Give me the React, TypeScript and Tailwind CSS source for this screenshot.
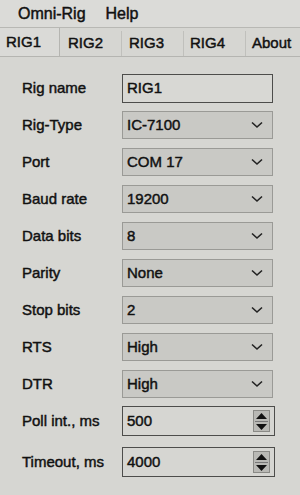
import React from "react";

const font = { fontFamily: '"Liberation Sans", Arial, sans-serif' };

function Chevron() {
  return (
    <svg width="12" height="8" viewBox="0 0 12 8" className="shrink-0">
      <polyline points="1,1.5 6,6 11,1.5" fill="none" stroke="#222" strokeWidth="1.6" />
    </svg>
  );
}

function Spin() {
  return (
    <div className="h-[22px] w-[17px] flex flex-col items-center justify-center gap-[2px] bg-[#b9b9b5] border border-[#8a8a86]">
      <svg width="11" height="6" viewBox="0 0 11 6">
        <polygon points="5.5,0 11,6 0,6" fill="#111" />
      </svg>
      <div className="h-px w-[13px] bg-[#777]" />
      <svg width="11" height="6" viewBox="0 0 11 6">
        <polygon points="0,0 11,0 5.5,6" fill="#111" />
      </svg>
    </div>
  );
}

type Row = { label: string; value: string; kind: "text" | "combo" | "spin" };

const rows: Row[] = [
  { label: "Rig name", value: "RIG1", kind: "text" },
  { label: "Rig-Type", value: "IC-7100", kind: "combo" },
  { label: "Port", value: "COM 17", kind: "combo" },
  { label: "Baud rate", value: "19200", kind: "combo" },
  { label: "Data bits", value: "8", kind: "combo" },
  { label: "Parity", value: "None", kind: "combo" },
  { label: "Stop bits", value: "2", kind: "combo" },
  { label: "RTS", value: "High", kind: "combo" },
  { label: "DTR", value: "High", kind: "combo" },
  { label: "Poll int., ms", value: "500", kind: "spin" },
  { label: "Timeout, ms", value: "4000", kind: "spin" },
];

export default function App() {
  return (
    <div
      className="w-[300px] h-[495px] overflow-hidden bg-[#d6d6d2] text-[#111] flex flex-col [-webkit-text-stroke:0.45px_#111]"
      style={font}
    >
      {/* menu bar */}
      <div className="h-[28px] shrink-0 flex items-center bg-[#dbdbd8] border-b border-[#b8b8b4] text-[16px]">
        <span className="ml-[18px] mt-[1px]">Omni-Rig</span>
        <span className="ml-[20px] mt-[1px]">Help</span>
      </div>
      {/* tabs */}
      <div className="h-[29px] shrink-0 flex items-stretch text-[15px] border-b border-[#b5b5b1]">
        <div className="w-[60px] flex items-center pl-[6px] bg-[#dadad7] border-r border-[#b5b5b1]">RIG1</div>
        <div className="w-[62px] flex items-center pl-[8px] mt-[3px] border-r border-[#c0c0bc]">RIG2</div>
        <div className="w-[62px] flex items-center pl-[7px] mt-[3px] border-r border-[#c0c0bc]">RIG3</div>
        <div className="w-[62px] flex items-center pl-[6px] mt-[3px] border-r border-[#c0c0bc]">RIG4</div>
        <div className="flex-1 flex items-center pl-[6px] mt-[3px]">About</div>
      </div>
      {/* form */}
      <div className="flex flex-col gap-[9px] pt-[17px]">
        {rows.map((r, i) => (
          <div key={r.label} className={`flex items-center h-[28px] ${i === 10 ? "mt-[4px]" : ""}`}>
            <div className="w-[122px] pl-[22px] text-[15px] whitespace-nowrap">{r.label}</div>
            {r.kind === "text" && (
              <div className="w-[151px] h-[29px] flex items-center pl-[4px] text-[15px] border border-[#4d4d4b] bg-[#d8d8d4]">
                {r.value}
              </div>
            )}
            {r.kind === "combo" && (
              <div className="w-[151px] h-[28px] flex items-center justify-between pl-[4px] pr-[9px] text-[15px] border border-[#9a9a96] bg-[#c9c9c5]">
                <span>{r.value}</span>
                <Chevron />
              </div>
            )}
            {r.kind === "spin" && (
              <div className="w-[153px] h-[30px] flex items-center justify-between pl-[4px] pr-[4px] text-[15px] border border-[#4d4d4b] bg-[#d6d6d2]">
                <span>{r.value}</span>
                <Spin />
              </div>
            )}
          </div>
        ))}
      </div>
    </div>
  );
}
